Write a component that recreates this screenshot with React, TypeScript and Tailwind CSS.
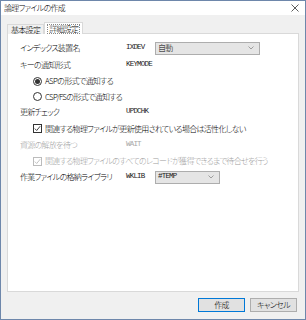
const mono = "font-['Liberation_Mono',monospace] text-[7.5px] tracking-[-0.8px] font-normal text-[#222]";

function Row({ h, children }: { h: string; children: React.ReactNode }) {
  return <div className={`flex items-center whitespace-nowrap ${h}`}>{children}</div>;
}

function Label({ text, code, disabled }: { text: string; code: string; disabled?: boolean }) {
  return (
    <>
      <span className={`w-[106px] shrink-0 ${disabled ? "text-[#a0a0a0]" : ""}`}>{text}</span>
      <span className={`w-[29px] shrink-0 ${mono} ${disabled ? "!text-[#a8a8a8]" : ""}`}>{code}</span>
    </>
  );
}

function Combo({ value, w }: { value: string; w: string }) {
  return (
    <div className={`${w} h-[13px] flex items-center justify-between bg-[#e5e5e5] border border-[#adadad] pl-[2px] pr-[5px]`}>
      <span className={value.startsWith("#") ? mono : ""}>{value}</span>
      <svg width="6" height="4" viewBox="0 0 6 4">
        <path d="M0.5 0.5 L3 3 L5.5 0.5" fill="none" stroke="#8a8a8a" strokeWidth="0.8" />
      </svg>
    </div>
  );
}

function Radio({ checked, label }: { checked?: boolean; label: string }) {
  return (
    <div className="flex items-center gap-[3px] pl-[13px]">
      <span className="w-[9px] h-[9px] rounded-full border border-[#333] bg-white flex items-center justify-center">
        {checked && <span className="w-[5px] h-[5px] rounded-full bg-[#333]" />}
      </span>
      <span>{label}</span>
    </div>
  );
}

function Check({ label, disabled }: { label: string; disabled?: boolean }) {
  const c = disabled ? "#bcbcbc" : "#333";
  return (
    <div className="flex items-center gap-[3px] pl-[13px]">
      <span
        className={`w-[9px] h-[9px] border bg-white flex items-center justify-center ${
          disabled ? "border-[#bcbcbc]" : "border-[#333]"
        }`}
      >
        <svg width="7" height="7" viewBox="0 0 7 7">
          <path d="M0.8 3.6 L2.7 5.5 L6.2 1.2" fill="none" stroke={c} strokeWidth="0.9" />
        </svg>
      </span>
      <span className={disabled ? "text-[#a0a0a0]" : ""}>{label}</span>
    </div>
  );
}

export default function App() {
  return (
    <div className="w-[306px] h-[320px] flex flex-col bg-[#f0f0f0] border border-[#6e87ab] font-['Noto_Sans_CJK_JP',sans-serif] font-light text-[8px] tracking-[-0.7px] leading-none text-black [font-feature-settings:'palt']">
      {/* title bar */}
      <div className="h-[14px] shrink-0 bg-white flex items-center justify-between pl-[3px] pr-[6px]">
        <span>論理ファイルの作成</span>
        <svg width="8" height="8" viewBox="0 0 8 8">
          <path d="M0.5 0.5 L7.5 7.5 M7.5 0.5 L0.5 7.5" stroke="#333" strokeWidth="0.8" />
        </svg>
      </div>

      <div className="flex flex-col px-[6px] pt-[6px]">
        {/* tabs */}
        <div className="flex items-end h-[12px] relative top-[1px]">
          <div className="h-[10px] px-[3px] flex items-center border border-b-0 border-[#d9d9d9] bg-[#f0f0f0]">
            基本設定
          </div>
          <div className="h-[12px] px-[2px] flex items-center border border-b-0 border-[#d9d9d9] bg-white">
            <span className="border border-dotted border-[#888] px-[1px]">詳細設定</span>
          </div>
        </div>

        {/* panel */}
        <div className="h-[259px] bg-white border border-[#d9d9d9] pt-[6px] pl-[12px]">
          <Row h="h-[16px]">
            <Label text="インデックス装置名" code="IXDEV" />
            <Combo value="自動" w="w-[105px]" />
          </Row>
          <Row h="h-[17px]">
            <Label text="キーの通知形式" code="KEYMODE" />
          </Row>
          <Row h="h-[16px]">
            <Radio checked label="ASPの形式で通知する" />
          </Row>
          <Row h="h-[15px]">
            <Radio label="CSP/FSの形式で通知する" />
          </Row>
          <Row h="h-[16px]">
            <Label text="更新チェック" code="UPDCHK" />
          </Row>
          <Row h="h-[17px]">
            <Check label="関連する物理ファイルが更新使用されている場合は活性化しない" />
          </Row>
          <Row h="h-[16px]">
            <Label text="資源の解放を待つ" code="WAIT" disabled />
          </Row>
          <Row h="h-[16px]">
            <Check disabled label="関連する物理ファイルのすべてのレコードが獲得できるまで待合せを行う" />
          </Row>
          <Row h="h-[16px]">
            <Label text="作業ファイルの格納ライブラリ" code="WKLIB" />
            <Combo value="#TEMP" w="w-[65px]" />
          </Row>
        </div>
      </div>

      {/* buttons */}
      <div className="flex justify-end gap-[5px] pr-[8px] pt-[6px]">
        <button className="w-[47px] h-[14px] flex items-center justify-center bg-[#e1e1e1] border border-[#0078d7]">
          作成
        </button>
        <button className="w-[47px] h-[14px] flex items-center justify-center bg-[#e1e1e1] border border-[#adadad]">
          キャンセル
        </button>
      </div>
    </div>
  );
}
